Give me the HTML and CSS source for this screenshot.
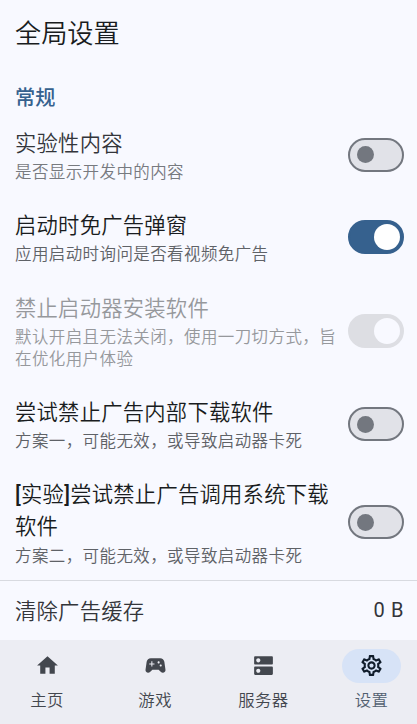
FILE: index.html
```html
<!DOCTYPE html>
<html lang="zh-CN">
<head>
<meta charset="utf-8">
<title>全局设置</title>
<link rel="stylesheet" href="styles.css">
</head>
<body>
<div class="app">
  <header class="topbar"><h1>全局设置</h1></header>
  <main class="settings">
    <h2 class="section">常规</h2>
    <div class="row muted">
      <div class="text"><div class="title">实验性内容</div><div class="desc">是否显示开发中的内容</div></div>
      <span class="switch"></span>
    </div>
    <div class="row">
      <div class="text"><div class="title">启动时免广告弹窗</div><div class="desc">应用启动时询问是否看视频免广告</div></div>
      <span class="switch on"></span>
    </div>
    <div class="row disabled">
      <div class="text"><div class="title">禁止启动器安装软件</div><div class="desc">默认开启且无法关闭，使用一刀切方式，旨在优化用户体验</div></div>
      <span class="switch on"></span>
    </div>
    <div class="row">
      <div class="text"><div class="title">尝试禁止广告内部下载软件</div><div class="desc">方案一，可能无效，或导致启动器卡死</div></div>
      <span class="switch"></span>
    </div>
    <div class="row last">
      <div class="text"><div class="title latin"><b>[</b>实验<b>]</b>尝试禁止广告调用系统下载软件</div><div class="desc">方案二，可能无效，或导致启动器卡死</div></div>
      <span class="switch"></span>
    </div>
    <div class="cache"><span class="title">清除广告缓存</span><span class="size">0 B</span></div>
  </main>
  <nav class="nav">
    <a class="item"><span class="pill"><svg viewBox="0 0 24 24"><path d="M10 20v-6h4v6h5v-8h3L12 3 2 12h3v8z"/></svg></span><span>主页</span></a>
    <a class="item"><span class="pill"><svg viewBox="0 0 24 24"><path d="M21.58 16.09l-1.09-7.66C20.21 6.46 18.52 5 16.53 5H7.47C5.48 5 3.79 6.46 3.51 8.43l-1.09 7.66C2.2 17.63 3.39 19 4.94 19c.68 0 1.32-.27 1.8-.75L9 16h6l2.25 2.25c.48.48 1.13.75 1.8.75 1.56 0 2.75-1.37 2.53-2.91zM11 11H9v2H8v-2H6v-1h2V8h1v2h2v1zm4-1c-.55 0-1-.45-1-1s.45-1 1-1 1 .45 1 1-.45 1-1 1zm2 3c-.55 0-1-.45-1-1s.45-1 1-1 1 .45 1 1-.45 1-1 1z"/></svg></span><span>游戏</span></a>
    <a class="item"><span class="pill"><svg viewBox="0 0 24 24"><path d="M20 13H4c-.55 0-1 .45-1 1v6c0 .55.45 1 1 1h16c.55 0 1-.45 1-1v-6c0-.55-.45-1-1-1zM7 19c-1.1 0-2-.9-2-2s.9-2 2-2 2 .9 2 2-.9 2-2 2zM20 3H4c-.55 0-1 .45-1 1v6c0 .55.45 1 1 1h16c.55 0 1-.45 1-1V4c0-.55-.45-1-1-1zM7 9c-1.1 0-2-.9-2-2s.9-2 2-2 2 .9 2 2-.9 2-2 2z"/></svg></span><span>服务器</span></a>
    <a class="item active"><span class="pill"><svg viewBox="0 0 24 24"><path d="M19.43 12.98c.04-.32.07-.64.07-.98 0-.34-.03-.66-.07-.98l2.11-1.65c.19-.15.24-.42.12-.64l-2-3.46c-.09-.16-.26-.25-.44-.25-.06 0-.12.01-.17.03l-2.49 1c-.52-.4-1.08-.73-1.69-.98l-.38-2.65C14.46 2.18 14.25 2 14 2h-4c-.25 0-.46.18-.49.42l-.38 2.65c-.61.25-1.17.59-1.69.98l-2.49-1c-.06-.02-.12-.03-.18-.03-.17 0-.34.09-.43.25l-2 3.46c-.13.22-.07.49.12.64l2.11 1.65c-.04.32-.07.65-.07.98 0 .33.03.66.07.98l-2.11 1.65c-.19.15-.24.42-.12.64l2 3.46c.09.16.26.25.44.25.06 0 .12-.01.17-.03l2.49-1c.52.4 1.08.73 1.69.98l.38 2.65c.03.24.24.42.49.42h4c.25 0 .46-.18.49-.42l.38-2.65c.61-.25 1.17-.59 1.69-.98l2.49 1c.06.02.12.03.18.03.17 0 .34-.09.43-.25l2-3.46c.12-.22.07-.49-.12-.64l-2.11-1.65zm-1.98-1.71c.04.31.05.52.05.73 0 .21-.02.43-.05.73l-.14 1.13.89.7 1.08.84-.7 1.21-1.27-.51-1.04-.42-.9.68c-.43.32-.84.56-1.25.73l-1.06.43-.16 1.13-.2 1.35h-1.4l-.19-1.35-.16-1.13-1.06-.43c-.43-.18-.83-.41-1.23-.71l-.91-.7-1.06.43-1.27.51-.7-1.21 1.08-.84.89-.7-.14-1.13c-.03-.31-.05-.54-.05-.74s.02-.43.05-.73l.14-1.13-.89-.7-1.08-.84.7-1.21 1.27.51 1.04.42.9-.68c.43-.32.84-.56 1.25-.73l1.06-.43.16-1.13.2-1.35h1.39l.19 1.35.16 1.13 1.06.43c.43.18.83.41 1.23.71l.91.7 1.06-.43 1.27-.51.7 1.21-1.07.85-.89.7.14 1.13zM12 8c-2.21 0-4 1.79-4 4s1.79 4 4 4 4-1.79 4-4-1.79-4-4-4zm0 6c-1.1 0-2-.9-2-2s.9-2 2-2 2 .9 2 2-.9 2-2 2z"/></svg></span><span>设置</span></a>
  </nav>
</div>
</body>
</html>
```
FILE: styles.css
```css
* { box-sizing: border-box; }
body {
  margin: 0;
  background: #f8f9ff;
  color: #191c20;
  font-family: "Noto Sans CJK SC", sans-serif;
  font-weight: 350;
}
.app { display: flex; flex-direction: column; height: 724px; overflow: hidden; }
.topbar { height: 67px; padding: 0 15px 4px; display: flex; align-items: center; }
h1 { margin: 0; font-size: 26.2px; font-weight: 350; line-height: 34px; }
.settings { flex: 1; display: flex; flex-direction: column; }
.section {
  margin: 0;
  height: 46.1px;
  padding: 16px 15px 0;
  font-size: 20.2px;
  font-weight: 500;
  line-height: 28px;
  color: #36618e;
}
.row { display: flex; align-items: center; gap: 10px; padding: 13px 12.6px 13px 15px; }
.last { padding-top: 14px; }
.text { flex: 1; min-width: 0; }
.title { font-size: 21.3px; letter-spacing: .25px; line-height: 32px; }
.latin { font-family: Roboto, "Noto Sans CJK SC", sans-serif; }
.latin b { font-weight: 500; }
.desc { margin-top: 1.9px; font-size: 16.5px; letter-spacing: .4px; line-height: 22.4px; color: #5f6267; }
.last .desc { margin-top: 1.2px; }
.muted .title { color: #33353a; }
.muted .desc { color: #777a7f; }
.disabled .title, .disabled .desc { color: #96989c; }
.switch {
  flex: none;
  display: flex;
  align-items: center;
  width: 56px;
  height: 34px;
  margin-top: 1px;
  padding-left: 6.5px;
  border: 2px solid #73777f;
  border-radius: 17px;
  background: #e1e2e8;
}
.last .switch { margin-top: 0; }
.switch::before { content: ""; width: 17px; height: 17px; border-radius: 50%; background: #73777f; }
.switch.on { padding-left: 23.5px; border-color: #36618e; background: #36618e; }
.switch.on::before { width: 26px; height: 26px; background: #fff; }
.disabled .switch { border-color: #dddee3; background: #dddee3; }
.disabled .switch::before { background: #f8f9ff; }
.cache {
  flex: 1;
  display: flex;
  align-items: center;
  justify-content: space-between;
  margin-top: .6px;
  padding: 0 13px 1px 15px;
  border-top: 1px solid #d8dae0;
  color: #33353a;
}
.size { font: 400 20px/32px Roboto, sans-serif; letter-spacing: .6px; }
.nav {
  height: 84px;
  padding: 9px 15.5px 0 17px;
  display: flex;
  justify-content: space-between;
  background: #ecedf3;
  color: #43474e;
}
.item {
  width: 60px;
  display: flex;
  flex-direction: column;
  align-items: center;
  gap: 5px;
  font-size: 16.4px;
  letter-spacing: .4px;
  line-height: 23px;
}
.pill { width: 59px; height: 34px; padding-bottom: 1px; border-radius: 17px; display: flex; align-items: center; justify-content: center; }
.pill svg { width: 25px; height: 25px; fill: currentColor; }
.active { color: #526070; }
.active .pill { background: #d7e3f7; color: #101c2b; }
```
